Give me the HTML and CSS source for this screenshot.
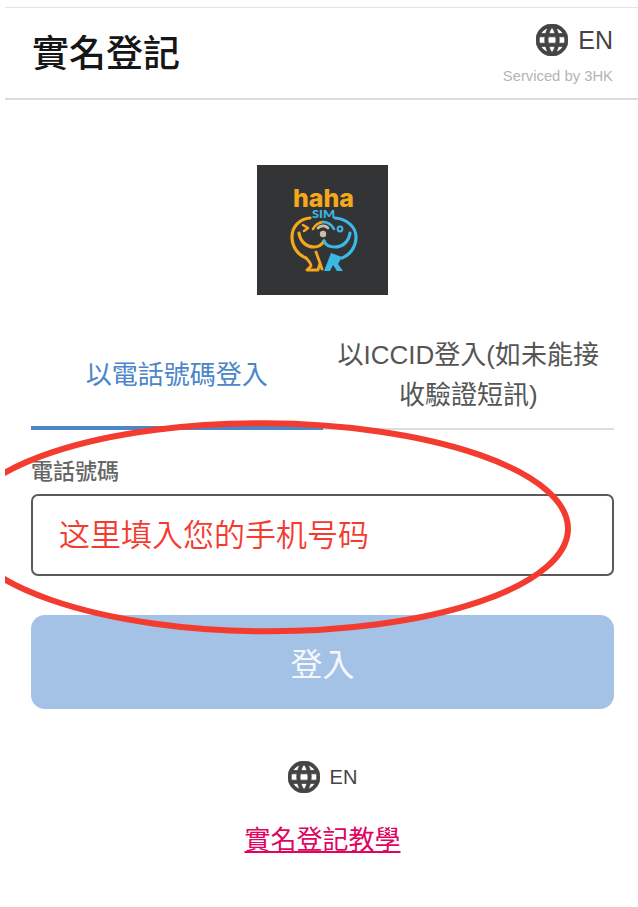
FILE: index.html
```html
<!DOCTYPE html>
<html lang="zh-Hant">
<head>
  <meta charset="UTF-8" />
  <meta name="viewport" content="width=device-width, initial-scale=1.0"/>
  <title>實名登記</title>
  <link rel="stylesheet" href="styles.css">
</head>
<body>
  <div class="page">

    <!-- Header -->
    <div class="header">
      <div class="header-title">實名登記</div>
      <div class="header-side">
        <div class="lang lang-top">
          <svg class="globe" viewBox="2 2 20 20"><use href="#globe-path"/></svg>
          <span>EN</span>
        </div>
        <div class="serviced">Serviced by 3HK</div>
      </div>
    </div>

    <!-- Logo -->
    <div class="logo-row">
      <svg class="logo" viewBox="0 0 131 130">
        <rect width="131" height="130" fill="#333436"/>
        <text x="36" y="42" class="logo-haha" textLength="61" lengthAdjust="spacingAndGlyphs">haha</text>
        <text x="55" y="53" class="logo-sim" textLength="23" lengthAdjust="spacingAndGlyphs">SIM</text>
        <g fill="none" stroke-width="3.2" stroke-linecap="round" stroke-linejoin="round">
          <g stroke="#f5a81c">
            <path d="M53 53 C42 54 35 62 35 72 C35 82 41 90 49 93"/>
            <path d="M42 68 C43 76 49 82 57 82 C61 82 64 81 67 76"/>
            <path d="M46 60 L51 63 L47 66" stroke-width="2.6"/>
            <path d="M49 93 C52 96 54 99 54 101 L50 105 L61 105 L63 98 M59 87 L63 98 L65 104" stroke-width="2.8"/>
            <path d="M56 64 A13 13 0 0 1 66 57" stroke-width="2.6"/>
          </g>
          <g stroke="#3cb8e6">
            <path d="M78 53 C90 54 99 62 99 72 C99 82 93 90 85 93"/>
            <path d="M93 68 C92 76 86 82 78 82 C73 82 69 81 67 76"/>
            <circle cx="83" cy="64" r="2.4" stroke-width="2"/>
            <path d="M66 57 A13 13 0 0 1 77 64" stroke-width="2.6"/>
          </g>
          <path d="M61 63 A7 7 0 0 1 71 63" stroke="#c9bfa6" stroke-width="2.6"/>
        </g>
        <path d="M74 88 L85 92 L81 99 L86 106 L80 106 L76 100 L73 106 L67 106 Z" fill="#3cb8e6"/>
        <circle cx="66" cy="69" r="3.2" fill="#c9bfa6"/>
      </svg>
    </div>

    <!-- Tabs -->
    <div class="tabs">
      <div class="tab tab-active">以電話號碼登入</div>
      <div class="tab">以ICCID登入(如未能接收驗證短訊)</div>
    </div>

    <!-- Form -->
    <div class="form">
      <label class="field-label" for="phone">電話號碼</label>
      <input class="field-input" id="phone" type="text" placeholder="这里填入您的手机号码">
      <button class="btn-login">登入</button>
    </div>

    <!-- Footer -->
    <div class="footer">
      <div class="lang lang-bottom">
        <svg class="globe" viewBox="2 2 20 20"><use href="#globe-path"/></svg>
        <span>EN</span>
      </div>
      <a class="guide-link" href="#">實名登記教學</a>
    </div>

    <!-- Red hand-drawn mark lying over the form -->
    <svg class="mark" viewBox="0 0 633 907">
      <ellipse cx="260" cy="527.3" rx="303" ry="104" transform="rotate(0.3 260 527.3)"/>
    </svg>
  </div>

  <svg class="defs" width="0" height="0">
    <defs>
      <path id="globe-path" d="M11.99 2C6.47 2 2 6.48 2 12s4.47 10 9.99 10C17.52 22 22 17.52 22 12S17.52 2 11.99 2zm6.93 6h-2.95c-.32-1.25-.78-2.45-1.38-3.56 1.84.63 3.37 1.91 4.33 3.56zM12 4.04c.83 1.2 1.48 2.53 1.91 3.96h-3.82c.43-1.43 1.08-2.76 1.91-3.96zM4.26 14C4.1 13.36 4 12.69 4 12s.1-1.36.26-2h3.38c-.08.66-.14 1.32-.14 2 0 .68.06 1.34.14 2H4.26zm.82 2h2.95c.32 1.25.78 2.45 1.38 3.56-1.84-.63-3.37-1.9-4.33-3.56zm2.95-8H5.08c.96-1.66 2.49-2.93 4.33-3.56C8.81 5.55 8.35 6.75 8.03 8zM12 19.96c-.83-1.2-1.48-2.53-1.91-3.96h3.82c-.43 1.43-1.08 2.76-1.91 3.96zM14.34 14H9.66c-.09-.66-.16-1.32-.16-2 0-.68.07-1.35.16-2h4.68c.09.65.16 1.32.16 2 0 .68-.07 1.34-.16 2zm.25 5.56c.6-1.11 1.06-2.31 1.38-3.56h2.95c-.96 1.65-2.49 2.93-4.33 3.56zM16.36 14c.08-.66.14-1.32.14-2 0-.68-.06-1.34-.14-2h3.38c.16.64.26 1.31.26 2s-.1 1.36-.26 2h-3.38z"/>
    </defs>
  </svg>
</body>
</html>
```

FILE: styles.css
```css
* {
  box-sizing: border-box;
}

body {
  margin: 0;
  background: #fff;
  font-family: "Liberation Sans", "Noto Sans CJK TC", sans-serif;
  overflow: hidden;
}

.page {
  position: relative;
  height: 907px;
  margin-left: 5px;
  padding-top: 7px;
  overflow: hidden;
}

.defs {
  position: absolute;
}

.header {
  display: flex;
  justify-content: space-between;
  height: 93px;
  padding: 0 25px 0 27px;
  border-top: 1px solid #e4e4e4;
  border-bottom: 2px solid #dcdcdc;
}

.header-title {
  margin-top: 20px;
  font-size: 37px;
  line-height: 54px;
  font-weight: 500;
  color: #161616;
}

.header-side {
  display: flex;
  flex-direction: column;
  align-items: flex-end;
  padding-top: 16px;
}

.lang {
  display: flex;
  align-items: center;
  color: #444;
}

.lang-top {
  gap: 10px;
  font-size: 25px;
  line-height: 32px;
}

.globe {
  width: 32px;
  height: 32px;
  fill: #444;
  stroke: #444;
  stroke-width: 0.5;
}

.serviced {
  margin-top: 11px;
  font-size: 14.8px;
  line-height: 18px;
  color: #b4b4b4;
}

.logo-row {
  display: flex;
  justify-content: center;
  padding-top: 65px;
  padding-left: 2px;
}

.logo {
  display: block;
  width: 131px;
  height: 130px;
}

.logo-haha {
  font-family: Inter, sans-serif;
  font-size: 25px;
  font-weight: 800;
  fill: #f5a81c;
}

.logo-sim {
  font-family: Lato, sans-serif;
  font-size: 12px;
  font-weight: 900;
  fill: #3cb8e6;
}

.tabs {
  display: flex;
  height: 135px;
  margin: 0 24px 0 26px;
  border-bottom: 2px solid #dedede;
}

.tab {
  flex: 1;
  display: flex;
  align-items: center;
  justify-content: center;
  padding: 24px 14px 0;
  margin-bottom: -2px;
  font-size: 26px;
  line-height: 40px;
  text-align: center;
  color: #555;
}

.tab-active {
  padding-top: 28px;
  color: #4a86c8;
  border-bottom: 4px solid #4a86c8;
}

.form {
  display: flex;
  flex-direction: column;
  margin: 0 24px 0 26px;
  padding-top: 27px;
}

.field-label {
  font-size: 22px;
  line-height: 30px;
  font-weight: 500;
  color: #666;
}

.field-input {
  height: 82px;
  margin-top: 7px;
  padding: 0 26px 6px;
  border: 2px solid #5a5a5a;
  border-radius: 7px;
  outline: none;
  background: #fff;
  font-family: "Noto Sans CJK SC", sans-serif;
  font-size: 31px;
}

.field-input::placeholder {
  color: #f43b30;
  opacity: 1;
  font-weight: 350;
}

.btn-login {
  height: 94px;
  margin-top: 39px;
  border: none;
  border-radius: 14px;
  background: #a4c2e6;
  font-family: inherit;
  font-size: 32px;
  color: #f4f7fb;
}

.footer {
  display: flex;
  flex-direction: column;
  align-items: center;
  padding-top: 52px;
  padding-left: 2px;
}

.lang-bottom {
  gap: 10px;
  font-size: 20px;
  line-height: 32px;
}

.guide-link {
  margin-top: 28px;
  font-size: 26px;
  line-height: 38px;
  color: #e0045f;
  text-decoration: underline;
}

.mark {
  position: absolute;
  top: 0;
  left: 0;
  width: 633px;
  height: 907px;
  pointer-events: none;
}

.mark ellipse {
  fill: none;
  stroke: #f43b30;
  stroke-width: 6;
}
```
